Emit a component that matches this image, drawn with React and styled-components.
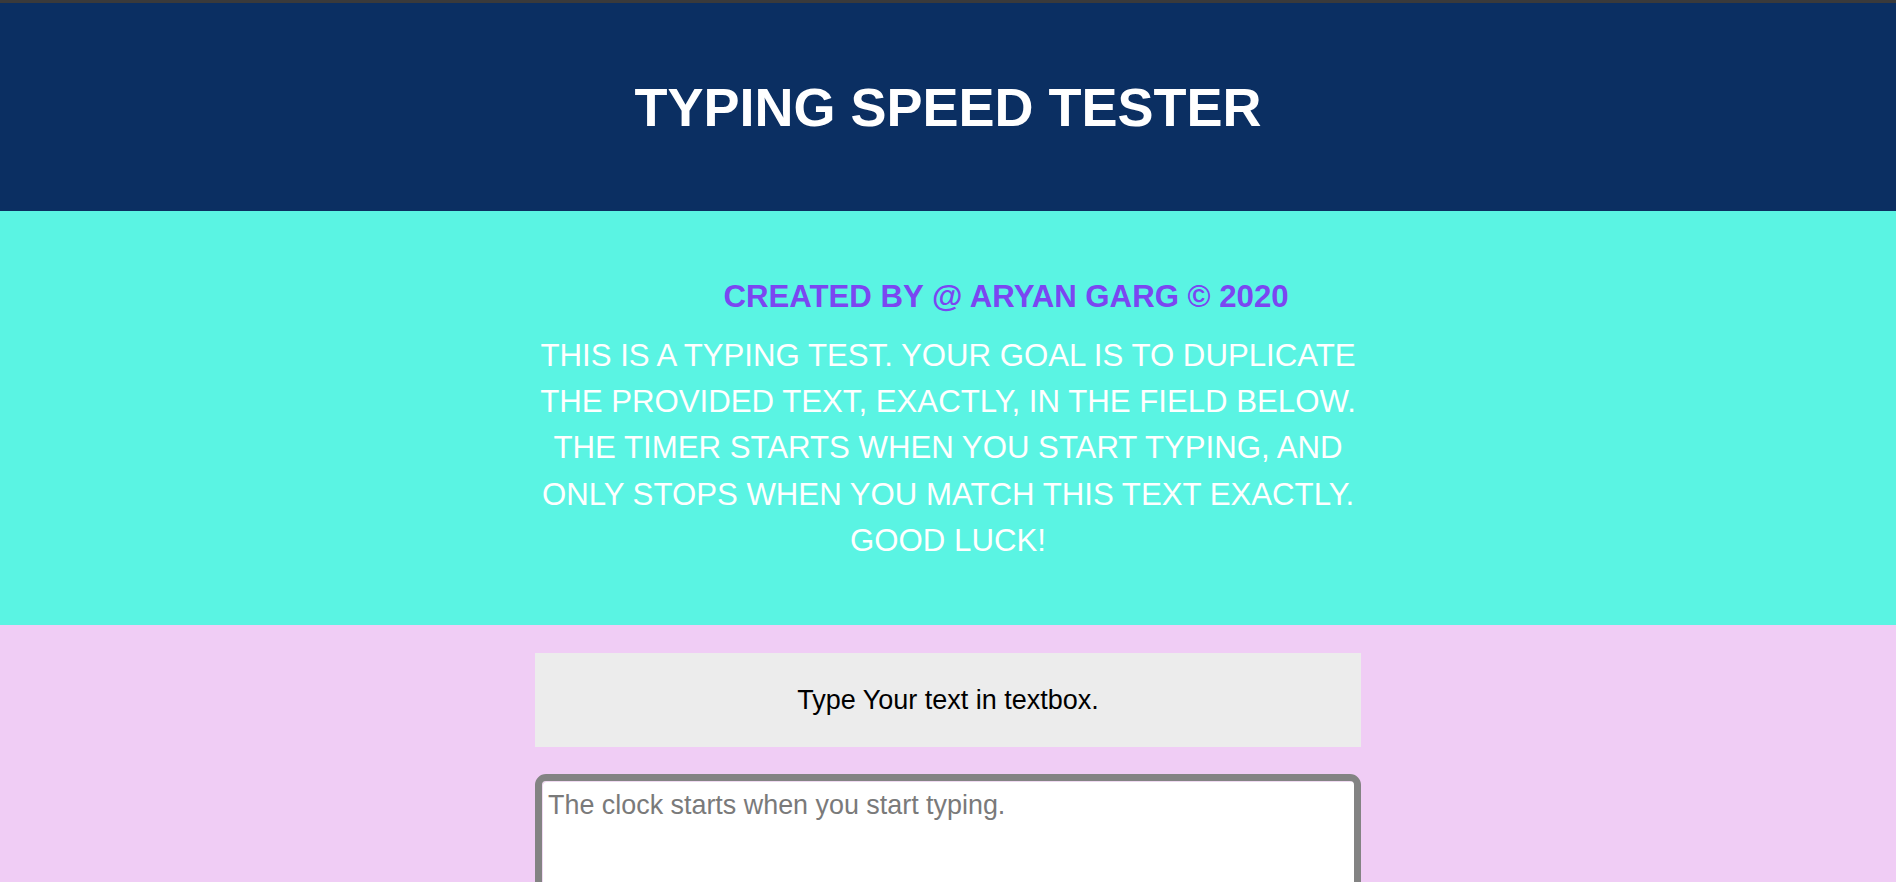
import React from "react";
import styled, { createGlobalStyle } from "styled-components";

const Global = createGlobalStyle`
  html, body { margin: 0; padding: 0; }
  body {
    background: #f0cdf5;
    font-family: "Liberation Sans", Arial, sans-serif;
  }
`;

const Page = styled.div`
  display: flex;
  flex-direction: column;
  min-height: 882px;
  background: #f0cdf5;
`;

const ChromeStrip = styled.div`
  height: 3px;
  background: #3a3a3b;
`;

const Header = styled.header`
  height: 208px;
  background: #0b2f62;
  display: flex;
  align-items: center;
  justify-content: center;
`;

const Title = styled.h1`
  margin: 0;
  color: #ffffff;
  font-size: 54px;
  font-weight: 700;
  letter-spacing: 0;
`;

const Intro = styled.section`
  background: #5af4e3;
  padding: 68px 0 61px;
  display: flex;
  justify-content: center;
`;

const Column = styled.div`
  width: 826px;
  display: flex;
  flex-direction: column;
  gap: ${(p) => p.$gap || 0}px;
`;

const Credit = styled.h3`
  margin: 0;
  padding-left: 116px;
  text-align: center;
  color: #7b46f1;
  font-size: 31.2px;
  font-weight: 700;
  line-height: normal;
`;

const Instructions = styled.p`
  margin: 0 -12px;
  text-align: center;
  color: #ffffff;
  font-size: 31.2px;
  line-height: 46.2px;
  text-transform: uppercase;
`;

const Main = styled.main`
  flex: 1;
  padding-top: 28px;
  display: flex;
  justify-content: center;
`;

const PromptBox = styled.div`
  height: 94px;
  background: #ececec;
  display: flex;
  align-items: center;
  justify-content: center;
  color: #000000;
  font-size: 27px;
`;

const TextBox = styled.textarea`
  box-sizing: border-box;
  width: 826px;
  height: 220px;
  border: 7px solid #838383;
  border-radius: 11px;
  box-shadow: inset 1px 1px 0 #efd9f1;
  background: #ffffff;
  padding: 9px 6px;
  font-family: "Liberation Sans", Arial, sans-serif;
  font-size: 26.9px;
  line-height: normal;
  resize: none;
  outline: none;
  &::placeholder {
    color: #7a7a7a;
  }
`;

export default function App() {
  return (
    <Page>
      <Global />
      <ChromeStrip />
      <Header>
        <Title>TYPING SPEED TESTER</Title>
      </Header>
      <Intro>
        <Column $gap={18}>
          <Credit>CREATED BY @ ARYAN GARG © 2020</Credit>
          <Instructions>
            This is a typing test. Your goal is to duplicate the provided text,
            EXACTLY, in the field below. The timer starts when you start typing,
            and only stops when you match this text exactly. Good Luck!
          </Instructions>
        </Column>
      </Intro>
      <Main>
        <Column $gap={27}>
          <PromptBox>Type Your text in textbox.</PromptBox>
          <TextBox placeholder="The clock starts when you start typing." />
        </Column>
      </Main>
    </Page>
  );
}
